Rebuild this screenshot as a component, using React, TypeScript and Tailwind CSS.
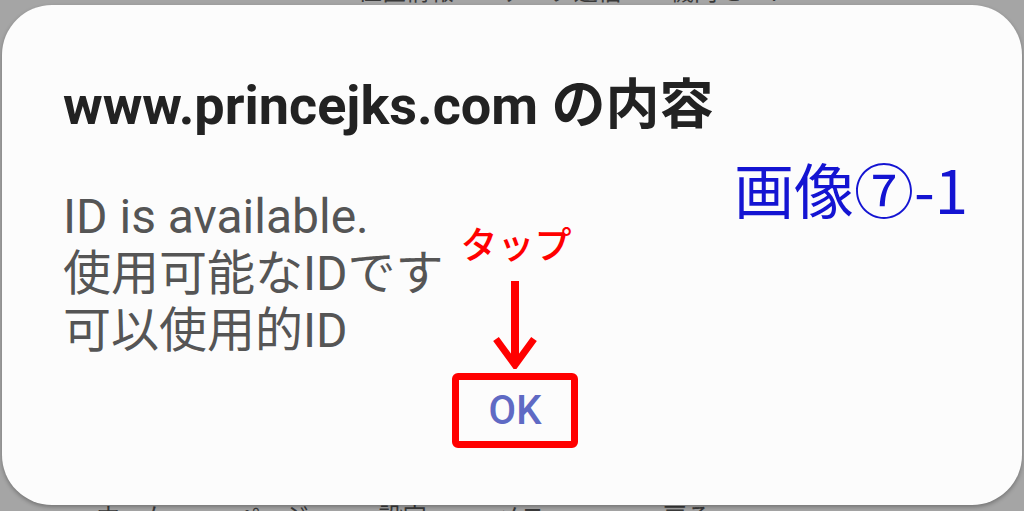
import React from 'react';

const latin = { fontFamily: 'Roboto, "Noto Sans CJK JP", sans-serif' };
const cjk = { fontFamily: '"Noto Sans CJK JP", sans-serif' };

function TapArrow() {
    return (
        <svg width="46" height="88" viewBox="0 0 46 88" fill="none">
            <path d="M23 0v84" stroke="#ff0000" strokeWidth="8" />
            <path d="M4 58l19 26 19-26" stroke="#ff0000" strokeWidth="7" />
        </svg>
    );
}

export default function App() {
    return (
        <div className="relative w-[1024px] h-[511px] overflow-hidden bg-[#a5a5a5]" style={latin}>
            {/* page behind the dim overlay, only its edges peek out */}
            <div className="flex flex-col justify-between h-full text-[#3a3a3a]">
                <div className="-mt-[20px] pl-[106px] flex gap-[48px] text-[24px] leading-[25px]">
                    <span>Bluetooth</span>
                    <span>Wi-Fi</span>
                    <span>位置情報</span>
                    <span>データ通信</span>
                    <span>機内モード</span>
                </div>
                <div className="-mb-[19px] pl-[96px] flex gap-[70px] text-[24px] leading-[25px]">
                    <span>ホーム</span>
                    <span>ページ</span>
                    <span>設定</span>
                    <span>メニュー</span>
                    <span>戻る</span>
                </div>
            </div>

            {/* dialog */}
            <div className="absolute left-[2px] top-[5px] w-[1020px] h-[500px] rounded-[50px] bg-[#fcfcfc] shadow-[0_2px_4px_rgba(0,0,0,0.3)] flex flex-col">
                <h1 className="mt-[71px] pl-[61px] text-[54px] leading-[60px] font-bold text-[#222]">
                    www.princejks.com の内容
                </h1>

                <div className="mt-[52px] flex items-start">
                    <div className="pl-[61px] w-[450px] text-[48px] leading-[57px] text-[#555]">
                        <p>ID is available.</p>
                        <p>使用可能なIDです</p>
                        <p>可以使用的ID</p>
                    </div>

                    <div className="w-[126px] mt-[36px] flex flex-col items-center">
                        <span className="text-[37px] leading-[38px] font-medium text-[#ff0000] pl-[2px]" style={cjk}>
                            タップ
                        </span>
                        <div className="mt-[19px]">
                            <TapArrow />
                        </div>
                        <button className="mt-[4px] w-[126px] h-[75px] border-[7px] border-[#ff0000] rounded-[6px] flex items-center justify-center text-[40px] font-medium text-[#5f6ac4]">
                            OK
                        </button>
                    </div>
                </div>

                <div className="absolute left-[732px] top-[148px] text-[60px] leading-[70px] text-[#1414d2]" style={cjk}>
                    画像⑦-1
                </div>
            </div>
        </div>
    );
}
